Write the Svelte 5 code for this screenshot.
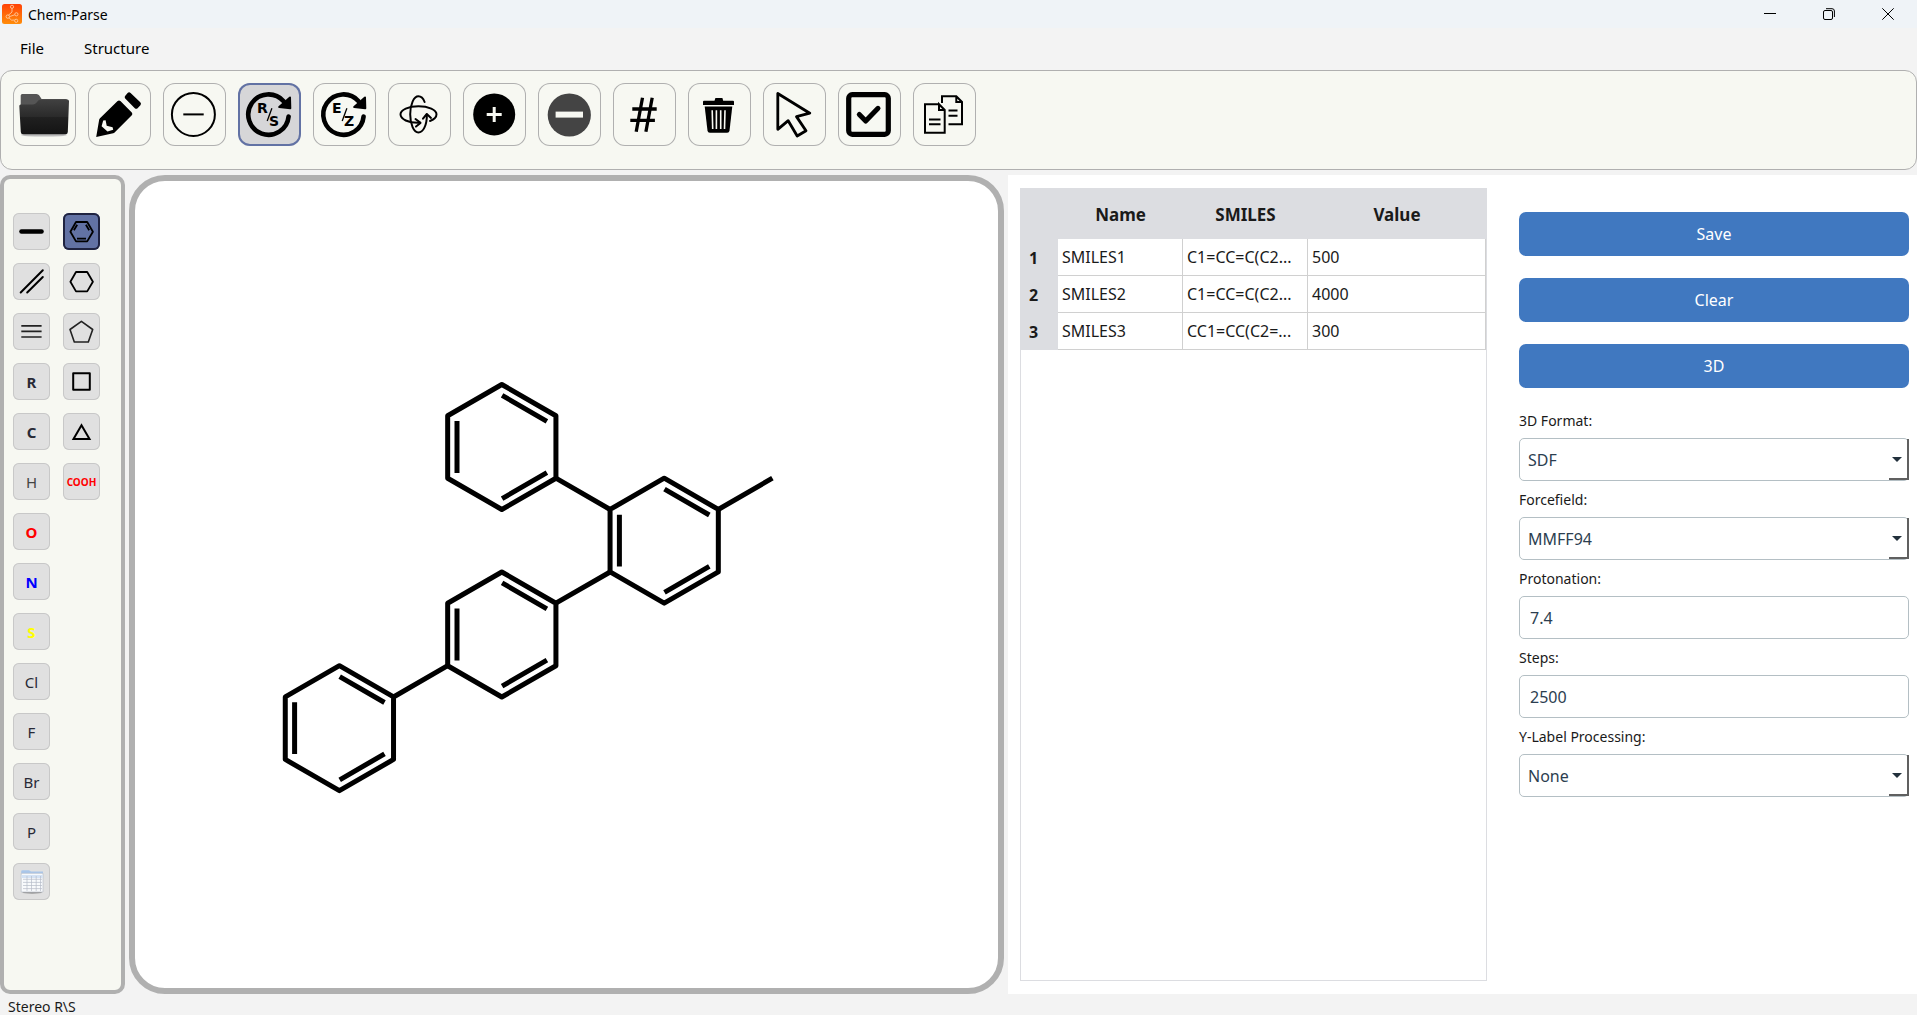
<script>
  const toolbar = [
    { id: 'open', label: 'Open file' },
    { id: 'draw', label: 'Draw' },
    { id: 'charge', label: 'Negative charge' },
    { id: 'rs', label: 'Stereo R/S' },
    { id: 'ez', label: 'Stereo E/Z' },
    { id: 'rotate', label: 'Rotate' },
    { id: 'plus', label: 'Increase' },
    { id: 'minus', label: 'Decrease' },
    { id: 'hash', label: 'Atom numbers' },
    { id: 'trash', label: 'Delete' },
    { id: 'select', label: 'Select' },
    { id: 'check', label: 'Clean up' },
    { id: 'copy', label: 'Copy' }
  ];
  let activeTool = $state('rs');

  const bonds = [
    { id: 'single', label: 'Single bond' },
    { id: 'double', label: 'Double bond' },
    { id: 'triple', label: 'Triple bond' },
    { id: 'R', text: 'R', kind: 'bold' },
    { id: 'C', text: 'C', kind: 'bold' },
    { id: 'H', text: 'H', kind: 'muted' },
    { id: 'O', text: 'O', kind: 'bold red' },
    { id: 'N', text: 'N', kind: 'bold blue' },
    { id: 'S', text: 'S', kind: 'bold yellow' },
    { id: 'Cl', text: 'Cl', kind: '' },
    { id: 'F', text: 'F', kind: '' },
    { id: 'Br', text: 'Br', kind: '' },
    { id: 'P', text: 'P', kind: '' },
    { id: 'table', label: 'Periodic table' }
  ];
  const rings = [
    { id: 'benzene', label: 'Benzene' },
    { id: 'hexagon', label: 'Cyclohexane' },
    { id: 'pentagon', label: 'Cyclopentane' },
    { id: 'square', label: 'Cyclobutane' },
    { id: 'triangle', label: 'Cyclopropane' },
    { id: 'COOH', text: 'COOH', kind: 'bold red small' }
  ];
  let activeShape = $state('benzene');

  const rows = [
    { name: 'SMILES1', smiles: 'C1=CC=C(C2...', value: '500' },
    { name: 'SMILES2', smiles: 'C1=CC=C(C2...', value: '4000' },
    { name: 'SMILES3', smiles: 'CC1=CC(C2=...', value: '300' }
  ];

  const R = 62.5;
  const W = 54.13;
  const H = 31.25;
  const centres = [
    [501.8, 447],
    [664.2, 540.7],
    [501.8, 634.5],
    [339.4, 728.2]
  ];
  const ringPath = ([x, y]) =>
    `M${x} ${y - R}L${x + W} ${y - H}V${y + H}L${x} ${y + R}L${x - W} ${y + H}V${y - H}Z`;
  const innerPath = ([x, y]) =>
    `M${x + 0.3} ${y - 51.6}l44.8 25.9M${x - 44.8} ${y - 25.9}v51.8M${x + 0.3} ${y + 51.6}l44.8 -25.9`;
</script>

<div class="app">
  <header class="titlebar">
    <svg class="logo" viewBox="0 0 20 20" aria-hidden="true">
      <defs>
        <linearGradient id="lg" x1="0" y1="0" x2="0" y2="1">
          <stop offset="0" stop-color="#ff4208" /><stop offset="1" stop-color="#ff8d0a" />
        </linearGradient>
      </defs>
      <rect width="20" height="20" rx="2.5" fill="url(#lg)" />
      <g fill="none" stroke="#ffc9a0" stroke-width="0.9">
        <circle cx="10" cy="2.8" r="1.6" /><circle cx="5.8" cy="12.6" r="1.7" />
        <circle cx="14.4" cy="10.3" r="1.6" /><circle cx="14.2" cy="16.8" r="1.6" />
        <path d="M10 4.4V8L6.6 11.1M7.5 12.6l5.3-1.8M7 13.8l2.6 2.4 3-.2" />
      </g>
    </svg>
    <span class="title">Chem-Parse</span>
    <div class="winctl">
      <button aria-label="Minimize"><svg viewBox="0 0 12 12"><path d="M0 5.5H12" /></svg></button>
      <button aria-label="Restore"><svg viewBox="0 0 12 12"><rect x=".5" y="2.5" width="9" height="9" rx="1.5" /><path d="M3 .7H9Q11.4.7 11.4 3V9" /></svg></button>
      <button aria-label="Close"><svg viewBox="0 0 12 12"><path d="M.3 .3L11.7 11.7M11.7 .3L.3 11.7" /></svg></button>
    </div>
  </header>

  <nav class="menu">
    <button>File</button>
    <button>Structure</button>
  </nav>

  <div class="toolbar" role="toolbar" aria-label="Tools">
    {#each toolbar as t}
      <button class="tool" class:active={activeTool === t.id} aria-label={t.label} onclick={() => (activeTool = t.id)}>
        <svg viewBox="0 0 63 63" fill="none" stroke="#000" aria-hidden="true">
          {#if t.id === 'open'}
            <defs>
              <linearGradient id="fg" x1="0" y1="0" x2="0" y2="1">
                <stop offset="0" stop-color="#414141" /><stop offset=".5" stop-color="#2a2a2a" /><stop offset=".52" stop-color="#202020" /><stop offset="1" stop-color="#141414" />
              </linearGradient>
            </defs>
            <ellipse cx="31" cy="52" rx="23" ry="1.6" fill="#bbb" stroke="none" />
            <path d="M7.7 24V12.5Q7.7 11 9.2 11H23.5Q25.3 11 26.3 12.5L28.6 16H52.5Q54.7 16 54.7 18V24Z" fill="#555" stroke="none" />
            <path d="M6.3 23Q6.2 21.4 7.8 21.4H20Q22 21.4 23.2 20L25.5 17.3Q26.4 16.4 28 16.4H54.3Q56 16.4 56 18.2L54.8 49Q54.7 51.3 52.5 51.3H10Q7.9 51.3 7.8 49Z" fill="url(#fg)" stroke="none" />
          {:else if t.id === 'draw'}
            <g fill="#000" stroke="none">
              <path d="M8.200 54L11.200 36.600Q11.400 35.800 12 35.200L29.600 18Q31 16.800 32.400 18L43.800 29.400Q45 30.800 43.800 32.200L26.600 49.400Q26 50 25.200 50.200Z" />
              <path d="M37.200 15.400Q36 14 37.300 12.700L39.600 10Q41 8.600 42.600 9.900L52.300 19.300Q53.700 20.800 52.400 22.300L49.600 25.200Q48.200 26.500 46.800 25.200Z" />
            </g>
            <path d="M13.600 43.200L15.200 37.600L17.600 37.300L18.700 42.800L24.600 44.200L25.200 46.800L19.500 48.600Z" fill="#f7f8f2" stroke="none" />
          {:else if t.id === 'charge'}
            <circle cx="30.400" cy="31.400" r="21.500" stroke-width="2" />
            <path d="M20.300 31.400H40.700" stroke-width="2" />
          {:else if t.id === 'rs' || t.id === 'ez'}
            <path d="M50.600 33.500A20.200 20.200 0 1 1 45.600 18.200" stroke-width="4.600" stroke-linecap="round" />
            <path d="M52 14.500L52.300 25.300L41.200 24.100Z" fill="#000" stroke-width="2" stroke-linejoin="round" />
            <path d="M33.900 25.300L29.200 38" stroke-width="1.300" />
            {#if t.id === 'rs'}
              <text x="19" y="29.500">R</text><text x="31" y="43">S</text>
            {:else}
              <text x="19" y="29.500">E</text><text x="31" y="43">Z</text>
            {/if}
          {:else if t.id === 'rotate'}
            <g stroke-width="2" stroke-linecap="round" stroke-linejoin="round">
              <path d="M32 39.700C20 40.300 12.500 36 12.500 31.300C12.500 27 20.500 23.300 30.500 23.300S48.500 27 48.500 31.300C48.500 34 46 36.500 42 38" />
              <path d="M27.500 36L32.500 39.900L28 43.600" />
              <path d="M36.600 19C35.200 15.300 33 13.300 30.400 13.300C25.800 13.300 22.200 21.300 22.200 31.300S25.800 49.500 30.400 49.500C35 49.500 39 42.500 38.900 31.500" />
              <path d="M35 35.700L38.800 31L43 34.900" />
            </g>
          {:else if t.id === 'plus'}
            <circle cx="31.200" cy="31.400" r="21" fill="#000" stroke="none" />
            <path d="M31.200 24V39M23.700 31.500H38.700" stroke="#f7f8f2" stroke-width="3" />
          {:else if t.id === 'minus'}
            <circle cx="31.300" cy="32" r="21.600" fill="#444" stroke="none" />
            <path d="M17.600 31.600H45" stroke="#f7f8f2" stroke-width="6" />
          {:else if t.id === 'hash'}
            <path d="M29.500 14.700L23.200 48.700M39.200 14.700L32.900 48.700M19.300 26H43.700M17.300 37.300H41.900" stroke-width="3.300" />
          {:else if t.id === 'trash'}
            <g fill="#000" stroke="none">
              <path d="M15 22V18.800Q15 17.800 16 17.800H26.500L27.400 15H34.400L35.200 17.800H45Q46 17.800 46 18.800V22Z" />
              <path d="M16.700 23.500H44.300L41.500 47.800Q41.200 49.800 39.200 49.800H21.800Q19.800 49.800 19.500 47.800Z" />
            </g>
            <path d="M24.200 27.300L24.700 46M28.400 27.300V46M32.700 27.300V46M37 27.300L36.500 46" stroke="#f7f8f2" stroke-width="1.600" />
          {:else if t.id === 'select'}
            <path d="M14.800 10.500V46.300L25.200 37.700L34.200 53L43 47.700L33.500 33.600L46.800 30.200Z" stroke-width="2.800" stroke-linejoin="round" />
          {:else if t.id === 'check'}
            <rect x="10.700" y="11.700" width="39.600" height="39.600" rx="3.500" stroke-width="5.200" />
            <path d="M21.300 31.500L27.700 38L40 25.300" stroke-width="5" stroke-linecap="round" stroke-linejoin="round" />
          {:else}
            <g stroke-width="2">
              <path d="M26 21.200H12V49.700H31.700V27L26 21.200V27H31.700" />
              <path d="M16 36.500H27.500M16 41.300H27.500" />
              <path d="M29 20V13.200H43.300L49 19V41.300H35.500M43.300 13.200V19H49M35.500 27.500H44.500M35.500 32.700H44.500" />
            </g>
          {/if}
        </svg>
      </button>
    {/each}
  </div>

  <main>
    {#snippet cell(b)}
      <button class="shape {b.kind ?? ''}" class:on={activeShape === b.id} aria-label={b.label ?? b.text} onclick={() => (activeShape = b.id)}>
        {#if b.text}{b.text}{:else}
          <svg viewBox="0 0 37 37" fill="none" stroke="#000" stroke-width="2" stroke-linejoin="round" aria-hidden="true">
            {#if b.id === 'single'}
              <path d="M8.500 18.500H28.500" stroke-width="4.600" stroke-linecap="round" />
            {:else if b.id === 'double'}
              <path d="M7.700 29.500L29.800 7.300M14.200 29.500L29.800 14" stroke-linecap="round" />
            {:else if b.id === 'triple'}
              <path d="M8.300 12.800H28.600M8.300 18.400H28.600M8.300 24H28.600" stroke="#222" stroke-width="1.700" />
            {:else if b.id === 'benzene'}
              <path d="M7.400 18.700L13 9H24.200L29.900 18.700L24.200 28.400H13ZM14 25.600H23M10.900 17.300L14.200 11.700M22.900 11.700L26.200 17.300" stroke-width="1.800" />
            {:else if b.id === 'hexagon'}
              <path d="M7.400 18.700L13 9H24.200L29.900 18.700L24.200 28.400H13Z" stroke-width="1.800" />
            {:else if b.id === 'pentagon'}
              <path d="M18.400 8.300L29.700 16.500L25.300 29H11.300L7 16.500Z" stroke="#222" stroke-width="1.600" />
            {:else if b.id === 'square'}
              <rect x="10.200" y="10.200" width="16.600" height="16.600" />
            {:else if b.id === 'triangle'}
              <path d="M18.500 12.300L26.500 26.100H10.500Z" stroke-linejoin="miter" />
            {:else}
              <ellipse cx="19.200" cy="29.500" rx="10" ry="1.200" fill="#999" stroke="none" />
              <path d="M8.200 8.500Q8.200 7.200 9.500 7.200H16L18 8.400H30V13H8.200Z" fill="#a9c6ea" stroke="none" />
              <rect x="8.200" y="10.300" width="21.800" height="18.700" fill="#f8fafc" stroke="#b4bac4" stroke-width=".600" />
              <path d="M8.500 13.500H29.700" stroke="#d4e2f4" stroke-width="3" />
              <path d="M10 16.300H29M10 19.400H29M10 22.500H29M10 25.600H29M14 13V28M18.500 13V28M23.200 13V28M27.500 13V28" stroke="#b6bcc8" stroke-width=".700" />
            {/if}
          </svg>
        {/if}
      </button>
    {/snippet}

    <aside class="palette">
      <div class="col">{#each bonds as b}{@render cell(b)}{/each}</div>
      <div class="col">{#each rings as b}{@render cell(b)}{/each}</div>
    </aside>

    <section class="canvas">
      <svg viewBox="135 181 863 807" role="img" aria-label="Molecule drawing">
        <g fill="none" stroke="#000" stroke-width="5" stroke-linejoin="round">
          {#each centres as c}
            <path d={ringPath(c)} />
            <path d={innerPath(c)} />
          {/each}
          <path d="M555.900 478.200L610.100 509.500M718.300 509.500L772.400 478.200M610.100 572L555.900 603.200M447.700 665.700L393.500 697" />
        </g>
      </svg>
    </section>

    <section class="data">
      <div class="sheet">
        <table>
          <thead>
            <tr><th class="num"></th><th class="mid">Name</th><th class="mid">SMILES</th><th>Value</th></tr>
          </thead>
          <tbody>
            {#each rows as r, i}
              <tr><th scope="row">{i + 1}</th><td>{r.name}</td><td>{r.smiles}</td><td>{r.value}</td></tr>
            {/each}
          </tbody>
        </table>
      </div>

      <form onsubmit={(e) => e.preventDefault()}>
        <button class="primary" type="button">Save</button>
        <button class="primary" type="button">Clear</button>
        <button class="primary" type="button">3D</button>
        <div class="fields">
          <label for="format">3D Format:</label>
          <div class="combo"><select id="format"><option>SDF</option><option>MOL2</option><option>PDB</option></select><span></span></div>
          <label for="force">Forcefield:</label>
          <div class="combo"><select id="force"><option>MMFF94</option><option>UFF</option></select><span></span></div>
          <label for="proton">Protonation:</label>
          <input id="proton" type="text" value="7.4" />
          <label for="steps">Steps:</label>
          <input id="steps" type="text" value="2500" />
          <label for="ylabel">Y-Label Processing:</label>
          <div class="combo"><select id="ylabel"><option>None</option><option>Log</option></select><span></span></div>
        </div>
      </form>
    </section>
  </main>

  <footer>Stereo R\S</footer>
</div>

<style>
  :global(body) { margin: 0; }
  .app {
    display: flex;
    flex-direction: column;
    height: 100vh;
    min-height: 960px;
    background: #f3f3f3;
    color: #1a1a1a;
    font-family: "Noto Sans", "Open Sans", sans-serif;
    font-size: 14px;
    overflow: hidden;
  }
  .app, .app * { box-sizing: border-box; }
  button, input, select { font: inherit; color: inherit; margin: 0; padding: 0; }
  svg { display: block; }

  .titlebar {
    display: flex;
    align-items: center;
    flex: none;
    height: 28px;
    padding-left: 2px;
    gap: 6px;
    background: #eff3f7;
    color: #000;
  }
  .logo { width: 20px; height: 20px; }
  .winctl { display: flex; margin-left: auto; }
  .winctl button {
    display: grid;
    place-items: center;
    width: 59px;
    height: 28px;
    border: 0;
    background: none;
  }
  .winctl svg { width: 12px; height: 12px; fill: none; stroke: #000; stroke-width: 1; }

  .menu { display: flex; flex: none; height: 42px; padding: 0 8px; gap: 16px; }
  .menu button { border: 0; background: none; padding: 0 12px; height: 40px; color: #000; font-size: 15px; }

  .toolbar {
    display: flex;
    flex: none;
    gap: 12px;
    height: 100px;
    padding: 12px;
    border: 1px solid #b0b0b0;
    border-radius: 12px;
    background: #f7f8f2;
  }
  .tool {
    width: 63px;
    height: 63px;
    border: 0;
    box-shadow: inset 0 0 0 1px #b0b0b0;
    border-radius: 12px;
    background: none;
  }
  .tool svg { width: 63px; height: 63px; }
  .tool.active { box-shadow: inset 0 0 0 2px #6272a4; background: #d6d6d8; }
  .tool text { fill: #000; stroke: none; font: bold 14px "DejaVu Sans", sans-serif; }

  main {
    display: grid;
    grid-template-columns: 125px minmax(0, 875fr) minmax(0, 909fr);
    flex: 1;
    min-height: 0;
    gap: 4px;
    padding-top: 5px;
  }
  .palette {
    display: flex;
    gap: 13px;
    padding: 34px 9px 0;
    border: 4px solid #b0b0b0;
    border-radius: 10px;
    background: #f7f8f2;
  }
  .col { display: flex; flex-direction: column; gap: 13px; }
  .shape {
    width: 37px;
    height: 37px;
    border: 0;
    box-shadow: inset 0 0 0 1px #c8c8c8;
    border-radius: 6px;
    background: #e0e0e0;
    color: #282a36;
    font-size: 15px;
  }
  .shape svg { width: 37px; height: 37px; }
  .shape.on { box-shadow: inset 0 0 0 2px #1f2340; background: #6272a4; }
  .bold { font-weight: 700; }
  .muted { color: #444; }
  .red { color: #f00; }
  .blue { color: #00f; }
  .yellow { color: #ff0; }
  .small { font-size: 10px; }

  .canvas {
    min-height: 0;
    border: 6px solid #b0b0b0;
    border-radius: 36px;
    background: #fff;
  }
  .canvas svg { width: 100%; height: 100%; }

  .data {
    display: grid;
    grid-template-columns: minmax(0, 467fr) minmax(0, 390fr);
    gap: 32px;
    padding: 13px 8px 13px 12px;
    background: #fff;
  }
  .sheet { border: 1px solid #dcdde1; font-size: 16px; }
  table { width: 100%; border-collapse: separate; border-spacing: 0; table-layout: fixed; }
  th { background: #dcdde1; font-weight: 700; padding: 0; }
  thead th { height: 50px; font-size: 17px; }
  tbody th { text-align: left; padding-left: 8px; }
  .num { width: 37px; }
  .mid { width: 125px; }
  td {
    height: 37px;
    padding: 0 4px;
    border-right: 1px solid #d0d0d0;
    border-bottom: 1px solid #d0d0d0;
    overflow: hidden;
    white-space: nowrap;
    text-overflow: ellipsis;
  }

  form { display: flex; flex-direction: column; gap: 22px; padding-top: 24px; }
  .primary {
    height: 44px;
    flex: none;
    border: 0;
    border-radius: 7px;
    background: #4078c0;
    color: #fff;
    font-size: 16px;
  }
  .fields { display: flex; flex-direction: column; }
  label { line-height: 22px; margin-bottom: 6px; }
  input, .combo { height: 43px; margin-bottom: 8px; font-size: 16px; color: #2c3e50; }
  input, select {
    width: 100%;
    border: 1px solid #b4bfc4;
    border-radius: 5px;
    background: #fff;
  }
  input { padding: 0 10px; }
  .combo { position: relative; }
  select { appearance: none; height: 100%; padding: 0 8px; }
  .combo span {
    position: absolute;
    right: 0;
    top: 1px;
    bottom: 1px;
    width: 20px;
    border-right: 2px solid #606060;
    border-bottom: 2px solid #606060;
    pointer-events: none;
  }
  .combo span::before {
    content: "";
    position: absolute;
    right: 5px;
    top: 18px;
    border: 5px solid transparent;
    border-top-color: #22303c;
    border-bottom: 0;
  }

  footer { flex: none; height: 21px; padding: 3px 8px; line-height: 20px; overflow: hidden; }
</style>
